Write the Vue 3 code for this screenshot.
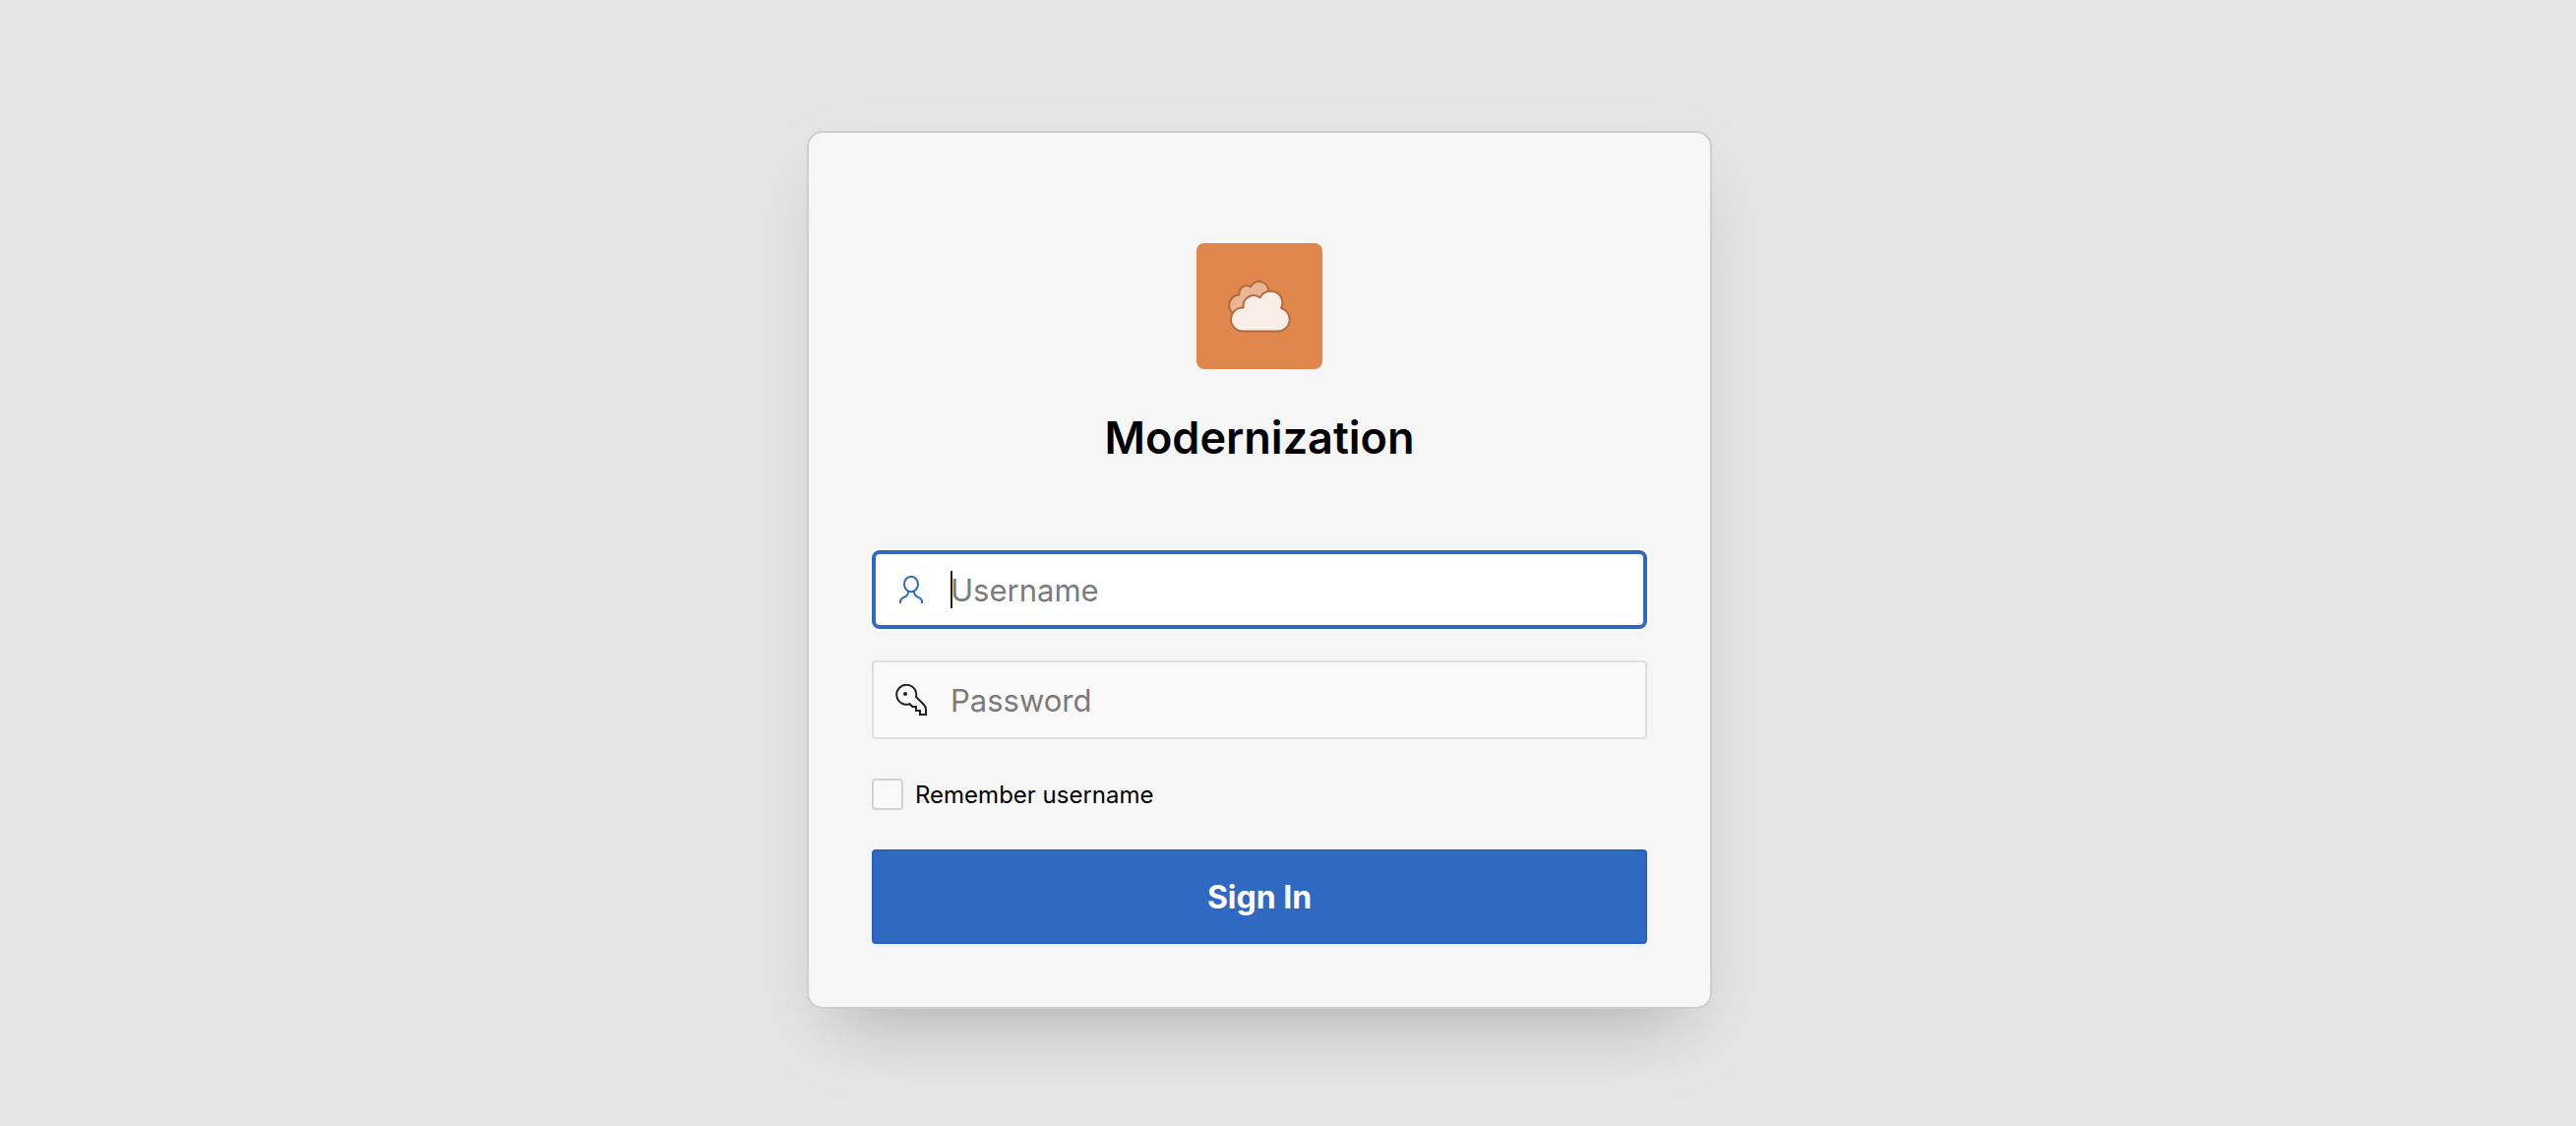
<script setup>
import { ref } from 'vue'

const username = ref('')
const password = ref('')
const remember = ref(false)
</script>

<template>
  <main class="page">
    <form class="card" @submit.prevent>
      <div class="logo">
        <svg viewBox="0 0 128 128" width="128" height="128" aria-hidden="true">
          <g stroke="#b26c40" stroke-width="2" stroke-linejoin="round">
            <path fill="#eab592" d="M36.500 71A10.800 10.800 0 0 1 43.500 52.500C43 45 49 41 55 44.500C60.500 35.500 73 38 73.500 50V71Z" />
            <path fill="#f9eee8" d="M47 89.500A12 12 0 0 1 47 65.500H47.700A10.500 10.500 0 0 1 64.500 55.500A11.800 11.800 0 1 1 86.100 66A12 12 0 0 1 83 89.500Z" />
          </g>
        </svg>
      </div>
      <h1 class="title">Modernization</h1>

      <div class="field focused">
        <svg class="icon" viewBox="0 0 32 32" fill="none" stroke="currentColor" stroke-width="2" aria-hidden="true">
          <ellipse cx="16" cy="10.500" rx="7" ry="7.800" />
          <path d="M5 30V28.500C5 25 7 24.500 9 23.700C12 22.500 13 21 13 18M19 18C19 21 20 22.500 23 23.700C25 24.500 27 25 27 28.500V30" />
        </svg>
        <div class="entry">
          <input v-model="username" class="input" type="text" placeholder="Username" aria-label="Username" autocomplete="username" />
          <span class="caret" aria-hidden="true"></span>
        </div>
      </div>

      <div class="field">
        <svg class="icon" viewBox="0 0 32 32" fill="none" stroke="currentColor" stroke-width="2" aria-hidden="true">
          <path d="M14.500 20.200A10 10 0 1 1 21 13L29 21C30.500 22.500 31 24 31 26V31H25V27H21V23H17.500L14.500 20.200Z" />
          <circle cx="10" cy="10" r="2" fill="currentColor" stroke="none" />
        </svg>
        <div class="entry">
          <input v-model="password" class="input" type="password" placeholder="Password" aria-label="Password" autocomplete="current-password" />
        </div>
      </div>

      <label class="remember">
        <input v-model="remember" class="check" type="checkbox" />
        <span class="remember-text">Remember username</span>
      </label>

      <button class="submit" type="submit">Sign In</button>
    </form>
  </main>
</template>

<style>
body {
  background: #e6e6e6;
}
</style>

<style scoped>
.page {
  box-sizing: border-box;
  min-height: 100vh;
  padding: 74px 58px 60px 0;
  display: flex;
  align-items: center;
  justify-content: center;
  background: #e6e6e6;
  color: #000;
  font-family: Inter, "Liberation Sans", sans-serif;
}

.card {
  box-sizing: border-box;
  width: 100%;
  max-width: 920px;
  padding: 112px 64px 64px;
  display: flex;
  flex-direction: column;
  border: 2px solid #cecece;
  border-radius: 16px;
  background: #f6f6f6;
  box-shadow: 0 32px 80px rgba(0, 0, 0, 0.08), 0 48px 64px -48px rgba(0, 0, 0, 0.2);
}

.logo {
  align-self: center;
  display: flex;
  border-radius: 8px;
  background: #df874d;
}

.title {
  margin: 40px 0 84px;
  font-size: 45px;
  font-weight: 600;
  line-height: 60px;
  text-align: center;
}

.field {
  box-sizing: border-box;
  height: 80px;
  margin-bottom: 32px;
  padding: 0 22px;
  display: flex;
  align-items: center;
  gap: 24px;
  border: 2px solid #dedede;
  border-radius: 4px;
  background: #f9f9f9;
  color: #222;
}

.focused {
  padding: 0 20px;
  border: 4px solid #2f69c2;
  border-radius: 8px;
  background: #fff;
  box-shadow: 0 0 0 2px #fff;
  color: #2f69c2;
}

.icon {
  width: 32px;
  height: 32px;
  flex: none;
}

.entry {
  position: relative;
  flex: 1;
  display: flex;
}

.input {
  width: 100%;
  padding: 2px 0 0;
  border: 0;
  outline: 0;
  background: transparent;
  color: #222;
  font: 400 31px/40px Inter, "Liberation Sans", sans-serif;
}

.input::placeholder {
  color: #7b7b7b;
  opacity: 1;
}

.caret {
  position: absolute;
  top: 2px;
  left: 0;
  width: 2px;
  height: 38px;
  background: #222;
}

.remember {
  margin: 8px 0 40px;
  display: flex;
  align-items: center;
  align-self: flex-start;
  gap: 12px;
  font-size: 24px;
  line-height: 30px;
}

.remember-text {
  padding-top: 2px;
}

.check {
  appearance: none;
  box-sizing: border-box;
  width: 32px;
  height: 32px;
  margin: 0;
  border: 2px solid #d2d2d2;
  border-radius: 4px;
  background: #f9f9f9;
}

.check:checked {
  background: #2f69c2;
}

.submit {
  height: 96px;
  padding: 2px 0 0;
  border: 2px solid #2b61b4;
  border-radius: 4px;
  background: #2f69c2;
  box-shadow: 0 4px 4px -2px rgba(0, 0, 0, 0.05);
  color: #fff;
  font: 700 32px/40px Inter, "Liberation Sans", sans-serif;
  cursor: pointer;
}
</style>
